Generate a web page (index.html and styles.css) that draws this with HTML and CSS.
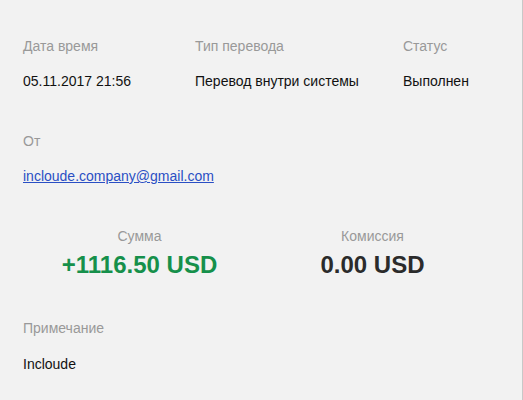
FILE: index.html
```html
<!DOCTYPE html>
<html lang="ru">
<head>
    <meta charset="UTF-8">
    <meta name="viewport" content="width=device-width, initial-scale=1.0">
    <title>Перевод</title>
    <link rel="stylesheet" href="styles.css">
</head>
<body>
    <div class="transfer">
        <!-- Main info -->
        <div class="info-row">
            <div class="field">
                <div class="label">Дата время</div>
                <div class="value">05.11.2017 21:56</div>
            </div>
            <div class="field">
                <div class="label">Тип перевода</div>
                <div class="value">Перевод внутри системы</div>
            </div>
            <div class="field">
                <div class="label">Статус</div>
                <div class="value">Выполнен</div>
            </div>
        </div>

        <!-- Sender -->
        <div class="field section">
            <div class="label">От</div>
            <div class="value"><a href="#" class="email">incloude.company@gmail.com</a></div>
        </div>

        <!-- Amounts -->
        <div class="amounts section">
            <div class="amount-box">
                <div class="label">Сумма</div>
                <div class="amount positive">+1116.50 USD</div>
            </div>
            <div class="amount-box">
                <div class="label">Комиссия</div>
                <div class="amount">0.00 USD</div>
            </div>
        </div>

        <!-- Note -->
        <div class="field section note">
            <div class="label">Примечание</div>
            <div class="value">Incloude</div>
        </div>
    </div>
</body>
</html>
```

FILE: styles.css
```css
html, body {
    margin: 0;
    height: 100%;
}
body {
    font-family: Arial, "Liberation Sans", sans-serif;
    font-size: 14px;
    line-height: 18px;
    background: #f2f2f2;
    color: #111;
}
.transfer {
    box-sizing: border-box;
    min-height: 100%;
    padding: 37px 33px 20px 23px;
    border-right: 1px solid #c8c8c8;
}
.info-row {
    display: grid;
    grid-template-columns: 172px 208px 1fr;
}
.label {
    color: #999;
    margin-bottom: 17px;
}
.value {
    color: #111;
}
.section {
    margin-top: 42px;
}
.email {
    color: #2a4fc4;
    text-decoration: underline;
}
.amounts {
    display: grid;
    grid-template-columns: 1fr 1fr;
    text-align: center;
    margin-top: 42px;
}
.amounts .label {
    margin-bottom: 6px;
}
.amount {
    font-size: 24px;
    line-height: 28px;
    font-weight: bold;
    color: #2b2b2b;
}
.amount.positive {
    color: #16904b;
}
.note {
    margin-top: 40px;
}
.note .label {
    margin-bottom: 18px;
}
```
